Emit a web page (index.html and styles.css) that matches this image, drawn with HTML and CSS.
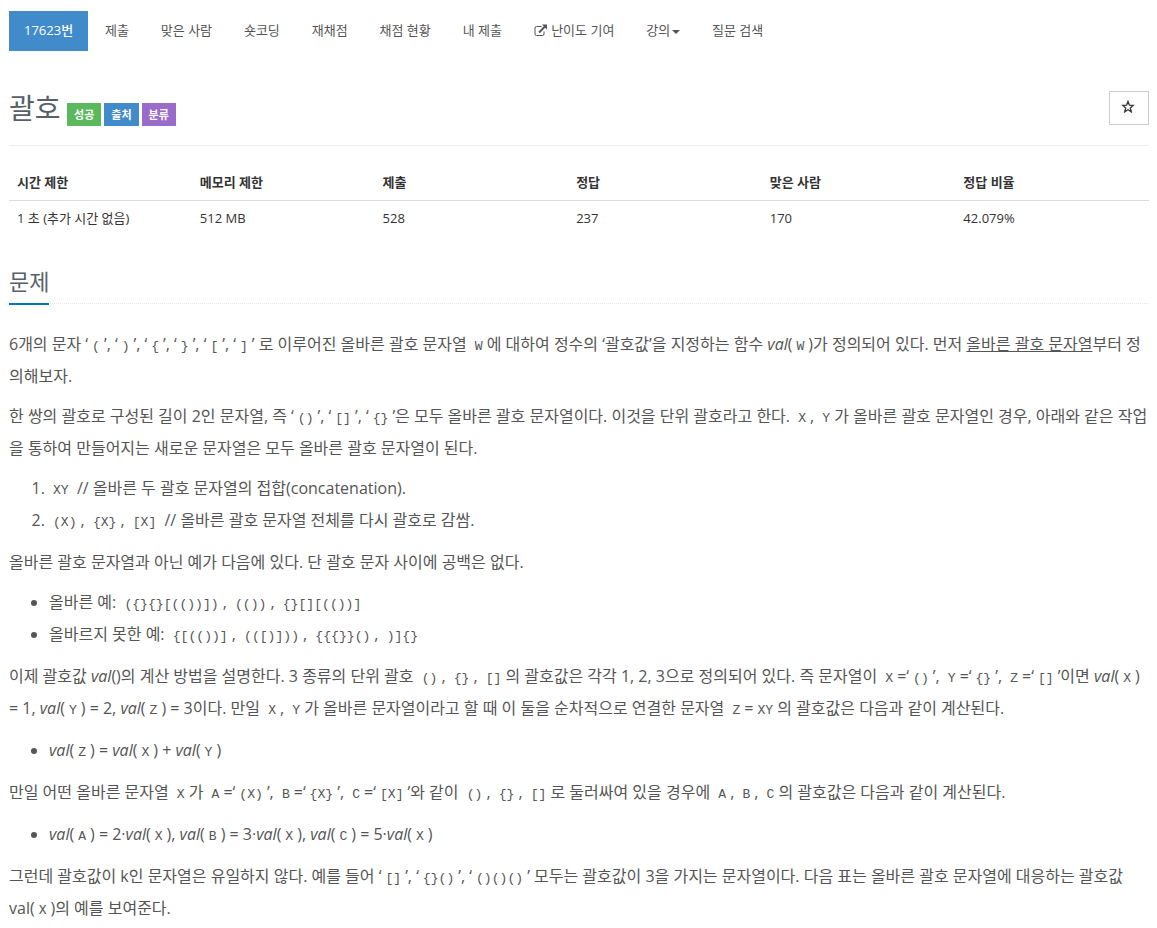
FILE: index.html
```html
<!DOCTYPE html>
<html lang="ko">
<head>
  <meta charset="UTF-8" />
  <meta name="viewport" content="width=device-width, initial-scale=1.0"/>
  <title>17623번: 괄호</title>
  <link rel="stylesheet" href="styles.css">
</head>
<body>
  <ul class="problem-menu">
    <li class="active"><a>17623번</a></li>
    <li><a>제출</a></li>
    <li><a>맞은 사람</a></li>
    <li><a>숏코딩</a></li>
    <li><a>재채점</a></li>
    <li><a>채점 현황</a></li>
    <li><a>내 제출</a></li>
    <li><a><svg class="icon-external" viewBox="0 0 14 13"><path d="M7.500 2.500H2.500Q1 2.500 1 4V10Q1 11.500 2.500 11.500H8.500Q10 11.500 10 10V7.500" fill="none" stroke="currentColor" stroke-width="1"/><path d="M5 8.500L11 2.500" fill="none" stroke="currentColor" stroke-width="1.900"/><path d="M8 0.500H13V5.500z" fill="currentColor"/></svg> 난이도 기여</a></li>
    <li><a>강의<span class="caret"></span></a></li>
    <li><a>질문 검색</a></li>
  </ul>

  <div class="page-header">
    <h1>괄호</h1>
    <span class="label label-success">성공</span>
    <span class="label label-source">출처</span>
    <span class="label label-tag">분류</span>
    <button class="btn-star" type="button" aria-label="즐겨찾기">
      <svg viewBox="0 0 14 14"><path d="M7 1.400L8.400 5.200L12.200 5.400L9.300 7.900L10.300 11.900L7 9.700L3.700 11.900L4.700 7.900L1.800 5.400L5.600 5.200z" fill="none" stroke="currentColor" stroke-width="1.300"/></svg>
    </button>
  </div>

  <table class="problem-info">
    <thead>
      <tr>
        <th class="col-limit">시간 제한</th>
        <th class="col-limit">메모리 제한</th>
        <th>제출</th>
        <th>정답</th>
        <th>맞은 사람</th>
        <th>정답 비율</th>
      </tr>
    </thead>
    <tbody>
      <tr>
        <td>1 초 (추가 시간 없음)</td>
        <td>512 MB</td>
        <td>528</td>
        <td>237</td>
        <td>170</td>
        <td>42.079%</td>
      </tr>
    </tbody>
  </table>

  <div class="headline"><h2>문제</h2></div>

  <div class="problem-text">
    <p>6개의 문자 ‘<code>(</code>’, ‘<code>)</code>’, ‘<code>{</code>’, ‘<code>}</code>’, ‘<code>[</code>’, ‘<code>]</code>’ 로 이루어진 올바른 괄호 문자열 <code>W</code>에 대하여 정수의 ‘괄호값’을 지정하는 함수 <em>val</em>(<code>W</code>)가 정의되어 있다. 먼저 <u>올바른 괄호 문자열</u>부터 정<br>의해보자.</p>

    <p>한 쌍의 괄호로 구성된 길이 2인 문자열, 즉 ‘<code>()</code>’, ‘<code>[]</code>’, ‘<code>{}</code>’은 모두 올바른 괄호 문자열이다. 이것을 단위 괄호라고 한다. <code>X</code>, <code>Y</code>가 올바른 괄호 문자열인 경우, 아래와 같은 작업<br>을 통하여 만들어지는 새로운 문자열은 모두 올바른 괄호 문자열이 된다.</p>

    <ol>
      <li><code>XY</code> // 올바른 두 괄호 문자열의 접합(concatenation).</li>
      <li><code>(X)</code>, <code>{X}</code>, <code>[X]</code> // 올바른 괄호 문자열 전체를 다시 괄호로 감쌈.</li>
    </ol>

    <p>올바른 괄호 문자열과 아닌 예가 다음에 있다. 단 괄호 문자 사이에 공백은 없다.</p>

    <ul>
      <li>올바른 예: <code>({}{}[(())])</code>, <code>(())</code>, <code>{}[][(())]</code></li>
      <li>올바르지 못한 예: <code>{[(())]</code>, <code>(([)]))</code>, <code>{{{}}()</code>, <code>)]{}</code></li>
    </ul>

    <p class="rule">이제 괄호값 <em>val</em>()의 계산 방법을 설명한다. 3 종류의 단위 괄호 <code>()</code>, <code>{}</code>, <code>[]</code>의 괄호값은 각각 1, 2, 3으로 정의되어 있다. 즉 문자열이 <code>X</code>=‘<code>()</code>’, <code>Y</code>=‘<code>{}</code>’, <code>Z</code>=‘<code>[]</code>’이면 <em>val</em>(<code>X</code>)<br>= 1, <em>val</em>(<code>Y</code>) = 2, <em>val</em>(<code>Z</code>) = 3이다. 만일 <code>X</code>, <code>Y</code>가 올바른 문자열이라고 할 때 이 둘을 순차적으로 연결한 문자열 <code>Z</code>=<code>XY</code>의 괄호값은 다음과 같이 계산된다.</p>

    <ul>
      <li><em>val</em>(<code>Z</code>) = <em>val</em>(<code>X</code>) + <em>val</em>(<code>Y</code>)</li>
    </ul>

    <p class="rule">만일 어떤 올바른 문자열 <code>X</code>가 <code>A</code>=‘<code>(X)</code>’, <code>B</code>=‘<code>{X}</code>’, <code>C</code>=‘<code>[X]</code>’와 같이 <code>()</code>, <code>{}</code>, <code>[]</code>로 둘러싸여 있을 경우에 <code>A</code>, <code>B</code>, <code>C</code>의 괄호값은 다음과 같이 계산된다.</p>

    <ul>
      <li><em>val</em>(<code>A</code>) = 2·<em>val</em>(<code>X</code>), <em>val</em>(<code>B</code>) = 3·<em>val</em>(<code>X</code>), <em>val</em>(<code>C</code>) = 5·<em>val</em>(<code>X</code>)</li>
    </ul>

    <p>그런데 괄호값이 k인 문자열은 유일하지 않다. 예를 들어 ‘<code>[]</code>’, ‘<code>{}()</code>’, ‘<code>()()()</code>’ 모두는 괄호값이 3을 가지는 문자열이다. 다음 표는 올바른 괄호 문자열에 대응하는 괄호값<br>val(<code>X</code>)의 예를 보여준다.</p>
  </div>
</body>
</html>
```

FILE: styles.css
```css
* {
  box-sizing: border-box;
}

body {
  font-family: "Open Sans", "Noto Sans CJK KR", sans-serif;
  font-size: 13px;
  line-height: 20px;
  color: #333;
  background: #fff;
  margin: 0;
  padding: 11px 8px 0 9px;
  height: 928px;
  overflow: hidden;
}

/* top menu */
.problem-menu {
  display: flex;
  gap: 1.9px;
  margin: 0;
  padding: 0;
  list-style: none;
}

.problem-menu a {
  display: block;
  height: 40px;
  padding: 9px 15px;
  color: #555;
  white-space: nowrap;
}

.problem-menu .active a {
  color: #fff;
  background: #428bca;
  font-weight: 500;
}

.icon-external {
  width: 14px;
  height: 13px;
  vertical-align: -2px;
}

.caret {
  display: inline-block;
  margin-left: 2px;
  vertical-align: middle;
  border-top: 4px solid;
  border-right: 4px solid transparent;
  border-left: 4px solid transparent;
}

/* title */
.page-header {
  display: flex;
  align-items: flex-end;
  height: 95px;
  padding-bottom: 19px;
  border-bottom: 1px solid #eee;
}

.page-header h1 {
  margin: 0 6.5px 0 0;
  font-size: 28px;
  font-weight: 400;
  line-height: 36px;
  color: #585f69;
}

.label {
  height: 23px;
  margin-right: 3px;
  padding: 0 7px;
  font-size: 11px;
  font-weight: 700;
  line-height: 23px;
  color: #fff;
}

.label-success {
  background: #5cb85c;
}

.label-source {
  background: #428bca;
}

.label-tag {
  background: #9b6bcc;
}

.btn-star {
  display: flex;
  align-items: center;
  justify-content: center;
  width: 40px;
  height: 34px;
  margin: 0 0 1px auto;
  padding: 0 2px 2px 0;
  color: #333;
  background: #fff;
  border: 1px solid #ccc;
}

.btn-star svg {
  width: 14px;
  height: 14px;
}

/* limits and statistics */
.problem-info {
  width: 100%;
  margin-top: 19px;
  border-collapse: collapse;
  table-layout: fixed;
}

.problem-info th,
.problem-info td {
  width: 17%;
  height: 35px;
  padding: 0 8px;
  text-align: left;
}

.problem-info .col-limit {
  width: 16.05%;
}

.problem-info th {
  border-bottom: 1px solid #ddd;
}

/* section title */
.headline {
  display: flex;
  height: 37px;
  margin: 32px 0 24px;
  border-bottom: 1px dotted #e4e9f0;
}

.headline h2 {
  height: 38px;
  margin: 0;
  font-size: 22px;
  font-weight: 400;
  line-height: 28px;
  color: #585f69;
  border-bottom: 2px solid #0076c0;
}

/* problem statement */
.problem-text {
  font-size: 16px;
  line-height: 32px;
  color: #555;
  white-space: nowrap;
}

.problem-text p {
  margin: 0 0 8px;
}

.problem-text p.rule {
  margin-bottom: 10px;
}

.problem-text ol,
.problem-text ul {
  margin: 0 0 10px;
  padding-left: 40px;
}

code {
  padding: 2px 4px;
  font-family: "Liberation Mono", monospace;
  font-size: 13.1px;
  line-height: 1;
}
```
